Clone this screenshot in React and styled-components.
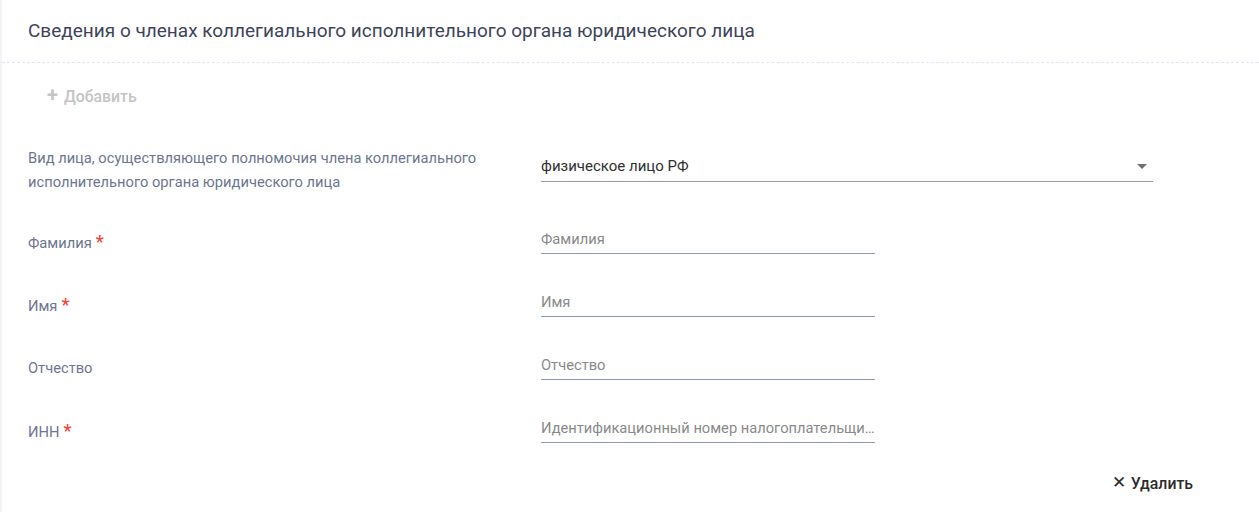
import React from "react";
import styled, { createGlobalStyle } from "styled-components";

const GlobalStyle = createGlobalStyle`
  html, body {
    margin: 0;
    padding: 0;
    background: #ffffff;
    font-family: Roboto, "Noto Sans", Arial, sans-serif;
  }
  * { box-sizing: border-box; }
`;

const Card = styled.section`
  width: 1259px;
  height: 512px;
  background: #ffffff;
  border-left: 2px solid #f2f3f5;
  overflow: hidden;
`;

const Header = styled.header`
  height: 63px;
  display: flex;
  align-items: center;
  padding-left: 26px;
  border-bottom: 1px dashed #dfe6f6;
`;

const Title = styled.h2`
  margin: 0;
  font-size: 19px;
  font-weight: 400;
  color: #3d4459;
  padding-bottom: 1px;
`;

const Toolbar = styled.div`
  display: flex;
  padding: 15px 0 0 26px;
`;

const GhostButton = styled.button`
  height: 36px;
  display: inline-flex;
  align-items: center;
  gap: ${(p) => (p.$dense ? "5px" : "6px")};
  padding: 0 ${(p) => (p.$dense ? "0" : "19px")};
  border: none;
  background: transparent;
  font-family: inherit;
  font-size: 15.8px;
  font-weight: 500;
  color: ${(p) => (p.$muted ? "#c4c4c4" : "#2b2b2b")};
  cursor: pointer;
`;

const Glyph = styled.span`
  font-size: ${(p) => p.$size || "20px"};
  font-weight: ${(p) => p.$weight || 700};
  line-height: 1;
  margin-top: -2px;
`;

const Form = styled.div`
  display: flex;
  flex-direction: column;
  padding: 24px 0 0 26px;
`;

const Row = styled.div`
  display: flex;
  align-items: center;
  min-height: 63px;
  margin-bottom: ${(p) => (p.$tall ? "7px" : "0")};
`;

const Label = styled.label`
  width: 513px;
  flex: none;
  padding-right: 30px;
  font-size: 14.7px;
  line-height: 24px;
  color: #6c7690;
  padding-top: ${(p) => (p.$shift ? "5px" : "0")};
`;

const Required = styled.span`
  color: #f44336;
  font-size: 18px;
  margin-left: 4px;
  font-weight: 500;
`;

const SelectBox = styled.div`
  width: 612px;
  height: 30px;
  display: flex;
  align-items: center;
  justify-content: space-between;
  border-bottom: 1px solid #939bab;
  font-size: 15px;
  color: #2f2f2f;
  margin-top: -6px;
`;

const Caret = styled.span`
  width: 0;
  height: 0;
  margin-right: 6px;
  border-left: 5px solid transparent;
  border-right: 5px solid transparent;
  border-top: 5px solid #707070;
`;

const Input = styled.input`
  width: 334px;
  height: 30px;
  padding: 0;
  border: none;
  border-bottom: 1px solid #8f98ae;
  outline: none;
  background: transparent;
  font-family: inherit;
  font-size: 14.7px;
  color: #2f2f2f;
  margin-top: -1px;
  text-overflow: ellipsis;
  &::placeholder {
    color: #8a8a8a;
  }
`;

const Footer = styled.div`
  display: flex;
  justify-content: flex-end;
  padding: 5px 66px 0 0;
`;

const fields = [
  { label: "Фамилия", placeholder: "Фамилия", required: true },
  { label: "Имя", placeholder: "Имя", required: true },
  { label: "Отчество", placeholder: "Отчество", required: false },
  {
    label: "ИНН",
    placeholder: "Идентификационный номер налогоплательщика",
    required: true,
  },
];

export default function App() {
  return (
    <>
      <GlobalStyle />
      <Card>
        <Header>
          <Title>Сведения о членах коллегиального исполнительного органа юридического лица</Title>
        </Header>
        <Toolbar>
          <GhostButton $muted>
            <Glyph>+</Glyph>
            <span>Добавить</span>
          </GhostButton>
        </Toolbar>
        <Form>
          <Row $tall>
            <Label>
              Вид лица, осуществляющего полномочия члена коллегиального исполнительного органа юридического лица
            </Label>
            <SelectBox>
              <span>физическое лицо РФ</span>
              <Caret />
            </SelectBox>
          </Row>
          {fields.map((f) => (
            <Row key={f.label}>
              <Label $shift>
                {f.label}
                {f.required && <Required>*</Required>}
              </Label>
              <Input placeholder={f.placeholder} />
            </Row>
          ))}
        </Form>
        <Footer>
          <GhostButton $dense>
            <Glyph $size="17px" $weight={400}>✕</Glyph>
            <span>Удалить</span>
          </GhostButton>
        </Footer>
      </Card>
    </>
  );
}
